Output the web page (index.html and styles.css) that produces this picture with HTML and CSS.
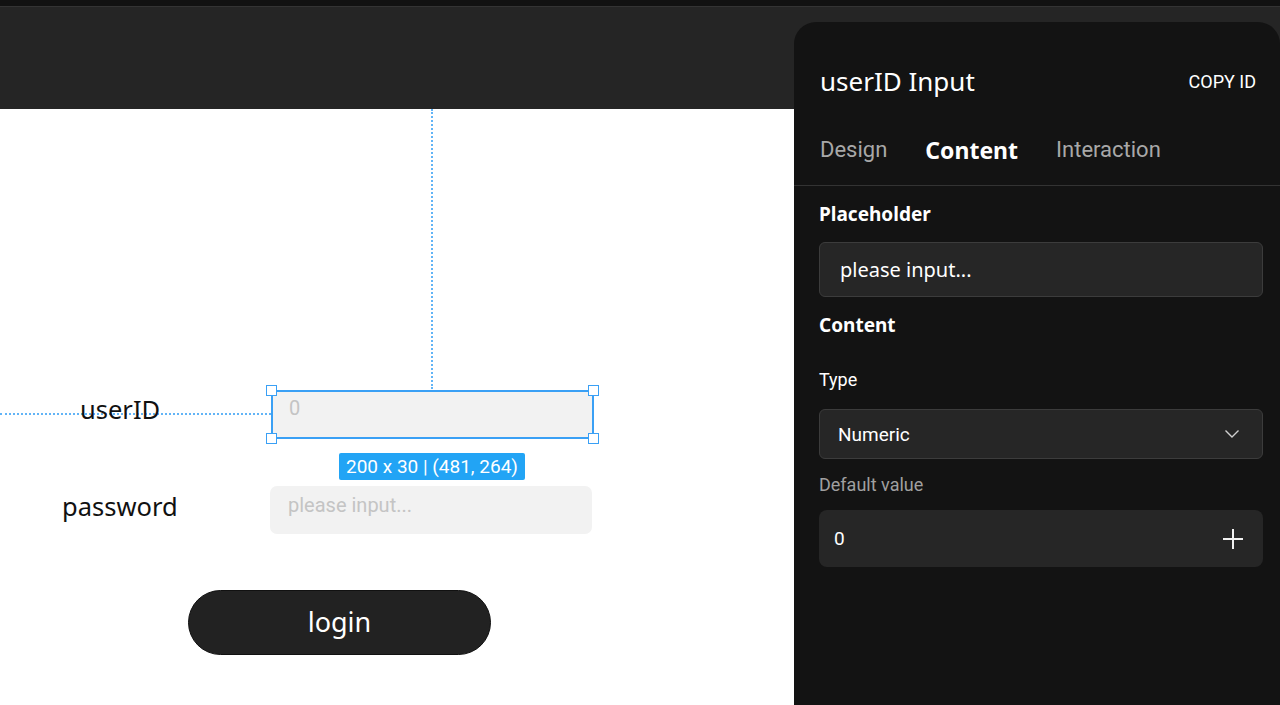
FILE: index.html
```html
<!DOCTYPE html>
<html>
<head>
<meta charset="utf-8">
<link rel="stylesheet" href="styles.css">
</head>
<body>
<div class="app">
  <div class="topstrip"></div>
  <div class="toolbar"></div>
  <div class="canvas">
    <div class="guide-v"></div>
    <div class="guide-h"></div>
    <div class="label label-user">userID</div>
    <div class="field field-user">
      <span class="ph">0</span>
      <span class="handle h-tl"></span>
      <span class="handle h-tr"></span>
      <span class="handle h-bl"></span>
      <span class="handle h-br"></span>
    </div>
    <div class="badge">200 x 30 | (481, 264)</div>
    <div class="label label-pass">password</div>
    <div class="field field-pass"><span class="ph">please input...</span></div>
    <div class="login">login</div>
  </div>

  <aside class="panel">
    <header class="panel-head">
      <h1 class="panel-title">userID Input</h1>
      <span class="copy">COPY ID</span>
    </header>
    <nav class="tabs">
      <span class="tab">Design</span>
      <span class="tab active">Content</span>
      <span class="tab">Interaction</span>
    </nav>
    <div class="panel-body">
      <div class="sec-title">Placeholder</div>
      <div class="box box-text">please input...</div>
      <div class="sec-title sec-content">Content</div>
      <div class="lbl lbl-type">Type</div>
      <div class="box box-select">
        <span>Numeric</span>
        <svg width="16" height="10" viewBox="0 0 16 10"><path d="M1.5 1.5 L8 8 L14.5 1.5" fill="none" stroke="#d0d0d0" stroke-width="1.4"/></svg>
      </div>
      <div class="lbl lbl-default">Default value</div>
      <div class="box box-num">
        <span>0</span>
        <svg width="22" height="22" viewBox="0 0 22 22"><path d="M11 1 V21 M1 11 H21" fill="none" stroke="#f0f0f0" stroke-width="2"/></svg>
      </div>
    </div>
  </aside>
</div>
</body>
</html>
```
FILE: styles.css
```css
* { box-sizing: border-box; }
html, body { margin: 0; padding: 0; }
body {
  width: 1280px;
  height: 705px;
  overflow: hidden;
  background: #ffffff;
  font-family: "Noto Sans", "Open Sans", sans-serif;
}
.app {
  position: relative;
  width: 1280px;
  height: 705px;
  display: flex;
  flex-direction: column;
}
.topstrip {
  height: 7px;
  background: #111111;
  border-bottom: 1px solid #333333;
}
.toolbar {
  height: 102px;
  background: #252525;
}
.canvas {
  position: relative;
  flex: 1;
  width: 794px;
  background: #ffffff;
}
.guide-v {
  position: absolute;
  left: 431px;
  top: 0;
  height: 280px;
  border-left: 2px dotted #62b4f6;
}
.guide-h {
  position: absolute;
  left: 0;
  top: 304px;
  width: 271px;
  border-top: 2px dotted #62b4f6;
}
.label {
  position: absolute;
  color: #111;
  font-size: 25.5px;
  line-height: 32px;
}
.label-user { left: 80px; top: 284px; }
.label-pass { left: 62px; top: 381px; }
.field {
  position: absolute;
  background: #f2f2f2;
  font-family: Roboto, sans-serif;
  font-size: 20px;
  color: #c4c4c4;
}
.field-user {
  left: 271px;
  top: 281px;
  width: 323px;
  height: 49px;
  border: 2px solid #3aa0f5;
  padding: 4px 0 0 16px;
}
.field-pass {
  left: 270px;
  top: 377px;
  width: 322px;
  height: 48px;
  border-radius: 7px;
  padding: 7px 0 0 18px;
}
.handle {
  position: absolute;
  width: 11px;
  height: 11px;
  background: #ffffff;
  border: 1.5px solid #3aa0f5;
}
.h-tl { left: -7px; top: -7px; }
.h-tr { right: -7px; top: -7px; }
.h-bl { left: -7px; bottom: -7px; }
.h-br { right: -7px; bottom: -7px; }
.badge {
  position: absolute;
  left: 339px;
  top: 344px;
  height: 27px;
  padding: 0 7px;
  background: #22a4f5;
  color: #ffffff;
  font-family: Roboto, sans-serif;
  font-size: 19px;
  line-height: 27px;
  border-radius: 2px;
}
.login {
  position: absolute;
  left: 188px;
  top: 481px;
  width: 303px;
  height: 65px;
  border-radius: 33px;
  background: #222222;
  border: 1px solid #111;
  color: #ffffff;
  font-size: 27px;
  display: flex;
  align-items: center;
  justify-content: center;
  padding-bottom: 2px;
}

.panel {
  position: absolute;
  left: 794px;
  top: 22px;
  width: 486px;
  height: 683px;
  background: #131313;
  border-radius: 22px 22px 0 0;
  color: #ffffff;
}
.panel-head {
  display: flex;
  justify-content: space-between;
  align-items: center;
  padding: 30px 24px 0 26px;
  height: 100px;
}
.panel-title {
  margin: 0;
  font-weight: 400;
  font-size: 26px;
  line-height: 38px;
  margin-top: -12px;
}
.copy {
  font-family: Roboto, sans-serif;
  font-size: 18px;
  margin-top: -12px;
}
.tabs {
  display: flex;
  gap: 38px;
  align-items: center;
  padding: 0 0 0 26px;
  height: 64px;
  border-bottom: 1px solid #333333;
  padding-bottom: 8px;
}
.tab {
  font-family: Roboto, sans-serif;
  font-size: 22px;
  color: #a8a8a8;
}
.tab.active {
  font-family: "Noto Sans", sans-serif;
  font-weight: 700;
  font-size: 23px;
  color: #ffffff;
}
.panel-body {
  padding: 1px 17px 0 25px;
}
.sec-title {
  font-weight: 700;
  font-size: 19px;
  line-height: 26px;
  margin-top: 14px;
}
.box {
  background: #262626;
  border: 1px solid #3c3c3c;
  border-radius: 6px;
  display: flex;
  align-items: center;
  justify-content: space-between;
}
.box-text {
  height: 55px;
  margin-top: 15px;
  padding-left: 20px;
  font-size: 20px;
}
.sec-content { margin-top: 15px; }
.lbl {
  font-family: Roboto, sans-serif;
  font-size: 18px;
  line-height: 24px;
}
.lbl-type { margin-top: 30px; }
.box-select {
  height: 50px;
  margin-top: 17px;
  padding: 0 22px 0 18px;
  font-family: Roboto, sans-serif;
  font-size: 19px;
}
.lbl-default {
  color: #a0a0a0;
  margin-top: 14px;
}
.box-num {
  height: 57px;
  margin-top: 13px;
  border: none;
  border-radius: 8px;
  padding: 0 19px 0 15px;
  font-family: Roboto, sans-serif;
  font-size: 19px;
}
```
